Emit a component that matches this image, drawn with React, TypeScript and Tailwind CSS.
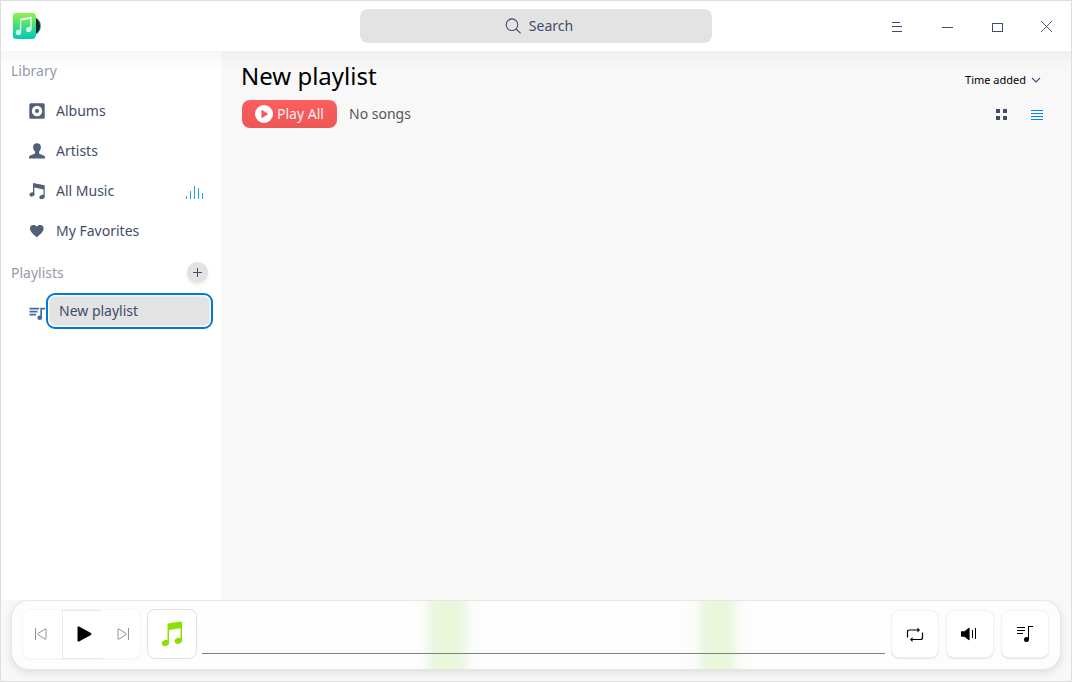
import type { ReactNode } from 'react';

function Logo() {
  return (
    <svg width="30" height="28" viewBox="0 0 30 28" className="block">
      <defs>
        <linearGradient id="logo" x1="0" y1="0" x2="0" y2="1">
          <stop offset="0" stopColor="#8cf545" />
          <stop offset="0.55" stopColor="#38dd85" />
          <stop offset="1" stopColor="#00c9bd" />
        </linearGradient>
      </defs>
      <circle cx="18.800" cy="14" r="9.800" fill="#152331" stroke="#26c98d" strokeWidth="0.800" />
      <path d="M4 1h17c1.500 0 3 2 3 4v18c0 2-1.500 4-4 4H4c-2 0-3-1-3-3V4c0-2 1-3 3-3z" fill="url(#logo)" />
      <path d="M8.600 20.300V7.200l10.400-1.700v12" fill="none" stroke="#f0fff3" strokeWidth="1.300" />
      <path d="M8 6.700l11.600-1.900v2L8 8.700z" fill="#f0fff3" />
      <circle cx="6.500" cy="20.400" r="2.600" fill="#d8fbe9" />
      <circle cx="16.700" cy="17.600" r="2.600" fill="#d8fbe9" />
    </svg>
  );
}

function WindowButton({ children }: { children: ReactNode }) {
  return (
    <button className="flex h-[50px] w-[50px] items-center justify-center pl-[2px]">
      <svg width="16" height="16" viewBox="0 0 16 16" fill="none" stroke="#414d68" shapeRendering="crispEdges">
        {children}
      </svg>
    </button>
  );
}

function NavItem({ label, icon, extra }: { label: string; icon: ReactNode; extra?: ReactNode }) {
  return (
    <li className="flex h-10 items-center pl-[28px] pr-[17px] text-[14px] text-[#414d68]">
      <svg width="16" height="16" viewBox="0 0 16 16" fill="#526079" className="mr-[11px]">
        {icon}
      </svg>
      <span className="flex-1 pb-[2px]">{label}</span>
      {extra}
    </li>
  );
}

function Sidebar() {
  return (
    <aside className="h-[549px] w-[220px] bg-[linear-gradient(to_bottom,#f7f7f7,#fff_18px)]">
      <h2 className="h-10 pl-[10px] text-[14px] leading-10 text-[#969aa9]">Library</h2>
      <ul>
        <NavItem
          label="Albums"
          icon={
            <>
              <rect x="0.300" y="0.300" width="15.400" height="15.400" rx="1.500" />
              <circle cx="8" cy="8" r="5.200" fill="#fff" />
              <circle cx="8" cy="8" r="2" />
            </>
          }
        />
        <NavItem
          label="Artists"
          icon={
            <path d="M8 .2c2.500 0 3.900 1.500 3.900 3.800 0 2-.8 3.600-1.900 4.700v1.700c1 .8 5 1.500 5.900 3.100.3.500.3 1.300.3 2H-.2c0-.7 0-1.500.3-2 .9-1.600 5-2.300 6-3.100V8.700C5 7.600 4.100 6 4.100 4 4.100 1.700 5.500.2 8 .2z" />
          }
        />
        <NavItem
          label="All Music"
          icon={
            <>
              <path d="M4 0L15.700 2.300V14h-1.200V6.400L5.300 4.600v7H4z" />
              <ellipse cx="3" cy="11.400" rx="2.600" ry="2.100" transform="rotate(-20 3 11.400)" />
              <ellipse cx="13" cy="14" rx="2.700" ry="2.100" transform="rotate(-20 13 14)" />
            </>
          }
          extra={
            <svg width="18" height="14" viewBox="0 0 18 14" fill="#21a3ef" className="mt-[2px]">
              <path d="M0 11h1v3H0zM4 6h1v8H4zM8 1h1v13H8zM12 3h1v11h-1zM16 8h1v6h-1z" />
            </svg>
          }
        />
        <NavItem
          label="My Favorites"
          icon={
            <path d="M7.800 14.300C5.500 12 1 8.900 1 5.700 1 2.700 3 2.100 4.500 2.100c1.500 0 2.600.7 3.300 1.500.7-.8 1.800-1.500 3.300-1.500 1.500 0 3.500.6 3.500 3.600 0 3.200-4.500 6.300-6.800 8.600z" />
          }
        />
      </ul>
      <div className="mb-px mt-px flex h-10 items-center justify-between pl-[10px] pr-[13px]">
        <h2 className="text-[14px] text-[#969aa9]">Playlists</h2>
        <button className="flex size-[21px] items-center justify-center rounded-full bg-[#e3e3e3] shadow-[0_2px_4px_#00000014]">
          <svg width="9" height="9" viewBox="0 0 9 9" fill="#414d68">
            <path d="M0 4h9v1H0zM4 0h1v9H4z" />
          </svg>
        </button>
      </div>
      <div className="flex items-start pl-[28px]">
        <svg width="17" height="16" viewBox="0 0 17 16" fill="#416aa2" className="mt-[13px] mr-[-1px]">
          <path d="M.5 1.800h9.700v1.800H.5zM.5 4.800h8v1.800h-8zM.5 7.800h6.500v1.800H.5zM11.300 1.800H16v1.800h-3V12h-1.700z" />
          <ellipse cx="10.800" cy="11.700" rx="2.400" ry="2.200" />
        </svg>
        <div className="ml-px flex h-[36px] w-[167px] rounded-[9px] border-2 border-[#0078dc] bg-white p-px">
          <div className="flex-1 rounded-[7px] border border-[#eee] bg-[#e3e3e3] pl-[9px] text-[14px] leading-[28px] text-[#414d68]">
            New playlist
          </div>
        </div>
      </div>
    </aside>
  );
}

function PlayerButton({ children }: { children: ReactNode }) {
  return (
    <button className="flex size-[48px] items-center justify-center rounded-[8px] border border-[#f1f1f1] bg-white shadow-[0_1px_1px_#00000018]">
      {children}
    </button>
  );
}

function Player() {
  return (
    <footer className="ml-[10px] flex h-[70px] w-[1050px] items-center rounded-[18px] border border-[#e6e6e6] bg-[#fdfdfd] bg-[linear-gradient(to_right,transparent_402px,#edf7e433_411px,#ebf7e3_421px,#e9f7da_430px,#e9f7da_442px,#ebf7e3_450px,#edf7e433_459px,transparent_470px,transparent_672px,#edf7e433_682px,#ebf7e3_692px,#e9f7da_702px,#e9f7da_710px,#ebf7e3_719px,#edf7e433_728px,transparent_738px)] pl-[10px] pr-[11px] shadow-[0_3px_8px_#0000001c]">
      <div className="mt-[-2px] flex h-[50px] w-[119px] items-center rounded-[8px] border border-[#f6f6f6] bg-white shadow-[0_1px_0_#00000008]">
        <button className="flex h-full w-[39px] items-center justify-center pr-[3px]">
          <svg width="12" height="12" viewBox="0 0 12 12" fill="none" stroke="#929292">
            <path d="M.5 0v12M11 1v10q-.3.500-.8.200L3.300 6.800q-.8-.7 0-1.500L10.200 1q.5-.4.800 0z" />
          </svg>
        </button>
        <button className="mt-px flex h-[49px] w-[40px] items-center justify-center border-y border-l border-[#e9e9e9] pl-[4px]">
          <svg width="15" height="16" viewBox="0 0 15 16" className="mb-px">
            <path d="M.5 1.500C.5.300 1.600.2 2.500.700l11 6c1.300.8 1.300 1.800 0 2.600l-11 6c-.9.500-2 .4-2-.8z" />
          </svg>
        </button>
        <button className="flex h-full flex-1 items-center justify-center pl-[3px]">
          <svg width="12" height="12" viewBox="0 0 12 12" fill="none" stroke="#929292">
            <path d="M11.500 0v12M1 1v10q.3.500.8.200l6.900-4.400q.8-.7 0-1.500L1.800 1Q1.300.600 1 1z" />
          </svg>
        </button>
      </div>
      <div className="ml-[6px] mt-[-2px] flex size-[50px] items-center justify-center rounded-[8px] border border-[#e1e1e1] bg-white">
        <svg width="22" height="26" viewBox="0 0 22 26" fill="#8cdf00">
          <path d="M6.500 4q.1-1.500 1.600-1.700L19.500.5Q21 .3 21 1.700v18h-1.500V7.300L8 9v13H6.500z" />
          <ellipse cx="4.400" cy="22" rx="3.700" ry="3" transform="rotate(-20 4.400 22)" />
          <ellipse cx="17.300" cy="19.800" rx="3.700" ry="3" transform="rotate(-20 17.300 19.800)" />
        </svg>
      </div>
      <div className="ml-[5px] mt-[37px] h-px w-[683px] bg-[#808080]" />
      <div className="mt-[-2px] ml-auto flex gap-[7px]">
        <PlayerButton>
          <svg width="18" height="16" viewBox="0 0 18 16" fill="none" stroke="#000" strokeWidth="1.200" className="mt-px">
            <path d="M1.500 10.500V5q0-2 2-2h9M16.500 5.500v5q0 2-2 2h-9" />
            <path d="M11.500 .5L14 3 11.500 5.500zM6.500 10L4 12.500 6.500 15z" fill="#000" stroke="none" />
          </svg>
        </PlayerButton>
        <PlayerButton>
          <svg width="18" height="14" viewBox="0 0 18 14" className="mr-[2px]">
            <path d="M1 4.200h3.500L8.600 1q1-.5 1 .5v11q0 1-1 .5L4.500 9.800H1.700Q1 9.800 1 9zM12 3h1v8h-1zM15 1h1v11h-1z" />
          </svg>
        </PlayerButton>
        <PlayerButton>
          <svg width="18" height="18" viewBox="0 0 18 18">
            <path d="M1 2h8v1H1zM1 5h8v1H1zM1 8h6v1H1zM12 1h5v1h-4v13h-1z" />
            <circle cx="10.500" cy="14.500" r="2.500" />
          </svg>
        </PlayerButton>
      </div>
    </footer>
  );
}

export default function App() {
  return (
    <div className="h-[682px] w-[1072px] overflow-hidden border border-[#dedede] bg-[#f8f8f8] font-['Noto_Sans',sans-serif]">
      <header className="flex h-[50px] items-center bg-white">
        <div className="ml-[11px]">
          <Logo />
        </div>
        <div className="ml-[318px] flex h-[34px] w-[352px] items-center justify-center rounded-[8px] bg-[#e3e3e3] pl-[6px] text-[14px] text-[#414d68]">
          <svg width="16" height="16" viewBox="0 0 16 16" fill="none" stroke="#414d68" strokeWidth="1.100" className="mr-[8px]">
            <circle cx="7" cy="6.700" r="5.800" />
            <path d="M11.200 11L15.600 15.400" />
          </svg>
          <span className="pb-[2px]">Search</span>
        </div>
        <div className="ml-auto mt-[2px] flex">
          <WindowButton>
            <path d="M3 3.500h8M3 7.500h10M3 12.500h10" />
          </WindowButton>
          <WindowButton>
            <path d="M3 8.500h11" />
          </WindowButton>
          <WindowButton>
            <path d="M3.500 4.500h10v8h-10z" />
          </WindowButton>
          <WindowButton>
            <path d="M2 2l11 11M13 2L2 13" shapeRendering="auto" strokeWidth="0.900" />
          </WindowButton>
        </div>
      </header>
      <div className="flex h-[549px]">
        <Sidebar />
        <main className="flex flex-1 justify-between bg-[linear-gradient(to_bottom,#f0f0f0,#f8f8f8_20px)] pl-[21px] pr-[28px]">
          <section>
            <h1 className="mt-[7px] ml-[-1px] text-[24px] leading-[36px] text-black">New playlist</h1>
            <div className="mt-[6px] flex items-center">
              <button className="flex h-[28px] w-[95px] items-center rounded-[8px] bg-linear-to-b from-[#fd5e5e] to-[#ed5656] pl-[12px] text-[14px] text-[#fff1f1]">
                <svg width="20" height="20" viewBox="0 0 20 20" className="mr-[3px]">
                  <circle cx="10" cy="10" r="9" fill="#fff" />
                  <path d="M7.500 6.300q0-.6.600-.3l5.500 3.500q.5.500 0 1L8.100 14q-.6.300-.6-.3z" fill="#f45a5a" />
                </svg>
                <span className="pb-[2px]">Play All</span>
              </button>
              <span className="ml-[12px] pb-[2px] text-[14px] text-[#555]">No songs</span>
            </div>
          </section>
          <section className="pt-[19px]">
            <button className="mr-[2px] flex h-[20px] items-center text-[11px] text-black">
              Time added
              <svg width="10" height="7" viewBox="0 0 10 7" fill="none" stroke="#414d68" strokeWidth="1.100" className="ml-[5px]">
                <path d="M1 1l4 4 4-4" />
              </svg>
            </button>
            <div className="mt-[19px] mr-[-1px] flex justify-end gap-[23px] pr-px">
              <svg width="12" height="12" viewBox="0 0 12 12" fill="#414d68">
                <path d="M0 0h4v4H0zM7 0h4v4H7zM0 7h4v4H0zM7 7h4v4H7z" />
              </svg>
              <svg width="12" height="12" viewBox="0 0 12 12" fill="#0081ff">
                <path d="M0 1h12v1H0zM0 4h12v1H0zM0 7h12v1H0zM0 10h12v1H0z" />
              </svg>
            </div>
          </section>
        </main>
      </div>
      <Player />
    </div>
  );
}
